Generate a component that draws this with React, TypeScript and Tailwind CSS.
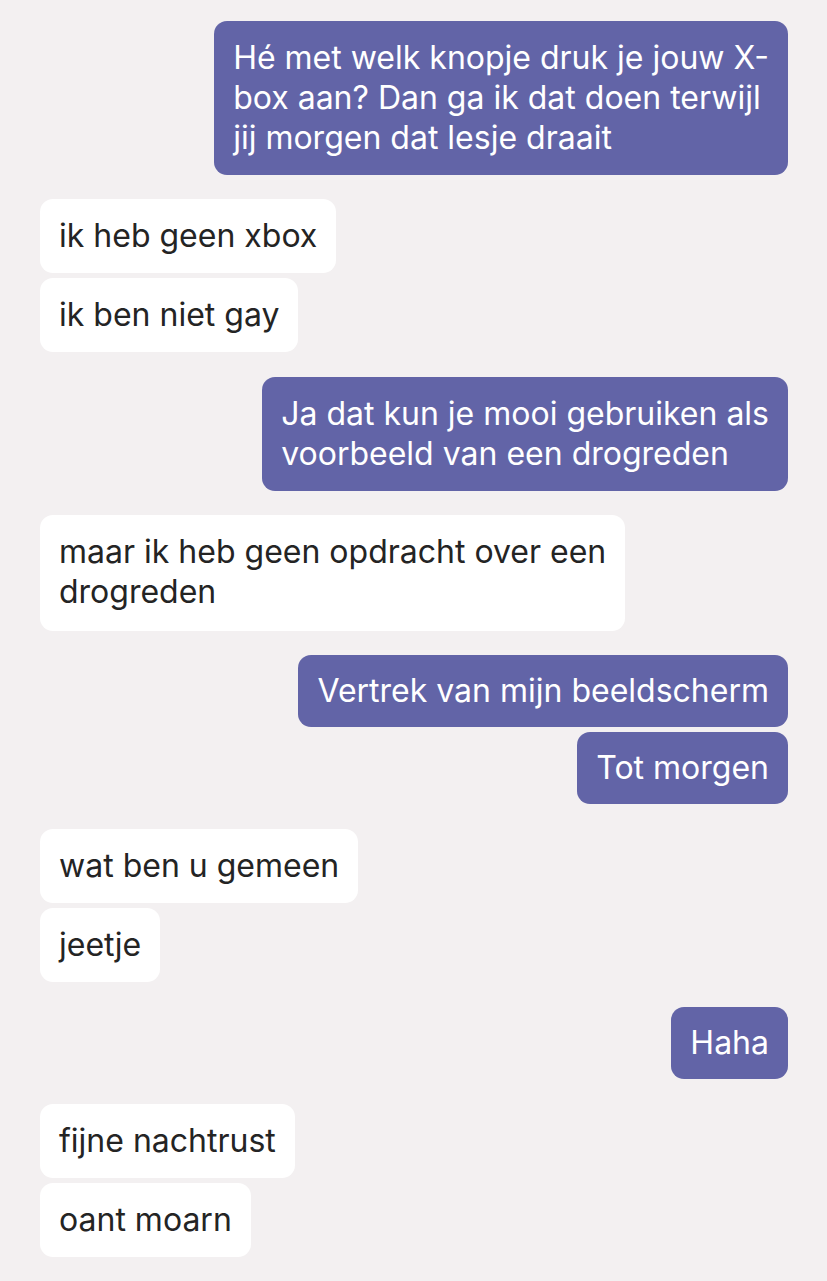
import React from "react";

type Msg = { me: boolean; lines: string[]; gapTop: number; pad?: string };

const messages: Msg[] = [
  { me: true, lines: ["Hé met welk knopje druk je jouw X-", "box aan? Dan ga ik dat doen terwijl", "jij morgen dat lesje draait"], gapTop: 21 },
  { me: false, lines: ["ik heb geen xbox"], gapTop: 24 },
  { me: false, lines: ["ik ben niet gay"], gapTop: 5 },
  { me: true, lines: ["Ja dat kun je mooi gebruiken als", "voorbeeld van een drogreden"], gapTop: 25 },
  { me: false, lines: ["maar ik heb geen opdracht over een", "drogreden"], gapTop: 24, pad: "pt-[17px] pb-[19px]" },
  { me: true, lines: ["Vertrek van mijn beeldscherm"], gapTop: 24, pad: "py-[16px]" },
  { me: true, lines: ["Tot morgen"], gapTop: 5, pad: "py-[16px]" },
  { me: false, lines: ["wat ben u gemeen"], gapTop: 25 },
  { me: false, lines: ["jeetje"], gapTop: 5 },
  { me: true, lines: ["Haha"], gapTop: 25, pad: "py-[16px]" },
  { me: false, lines: ["fijne nachtrust"], gapTop: 25 },
  { me: false, lines: ["oant moarn"], gapTop: 5 },
];

const Bubble: React.FC<{ msg: Msg }> = ({ msg }) => (
  <div
    className={msg.me ? "flex justify-end" : "flex justify-start"}
    style={{ marginTop: msg.gapTop }}
  >
    <div
      className={
        (msg.me
          ? "rounded-[13px] bg-[#6264a7] px-[19px] text-white "
          : "rounded-[13px] bg-white px-[19px] text-[#242424] ") +
        (msg.pad ?? "py-[17px]")
      }
    >
      {msg.lines.map((line, i) => (
        <div key={i} className="whitespace-nowrap">
          {line}
        </div>
      ))}
    </div>
  </div>
);

const App: React.FC = () => {
  return (
    <div
      className="min-h-[1281px] w-[827px] bg-[#f3f0f1] pl-[40px] pr-[39px] pb-6 text-[32px] leading-[40px]"
      style={{ fontFamily: "Inter, 'Noto Sans', sans-serif" }}
    >
      <div className="flex flex-col">
        {messages.map((m, i) => (
          <Bubble key={i} msg={m} />
        ))}
      </div>
    </div>
  );
};

export default App;
